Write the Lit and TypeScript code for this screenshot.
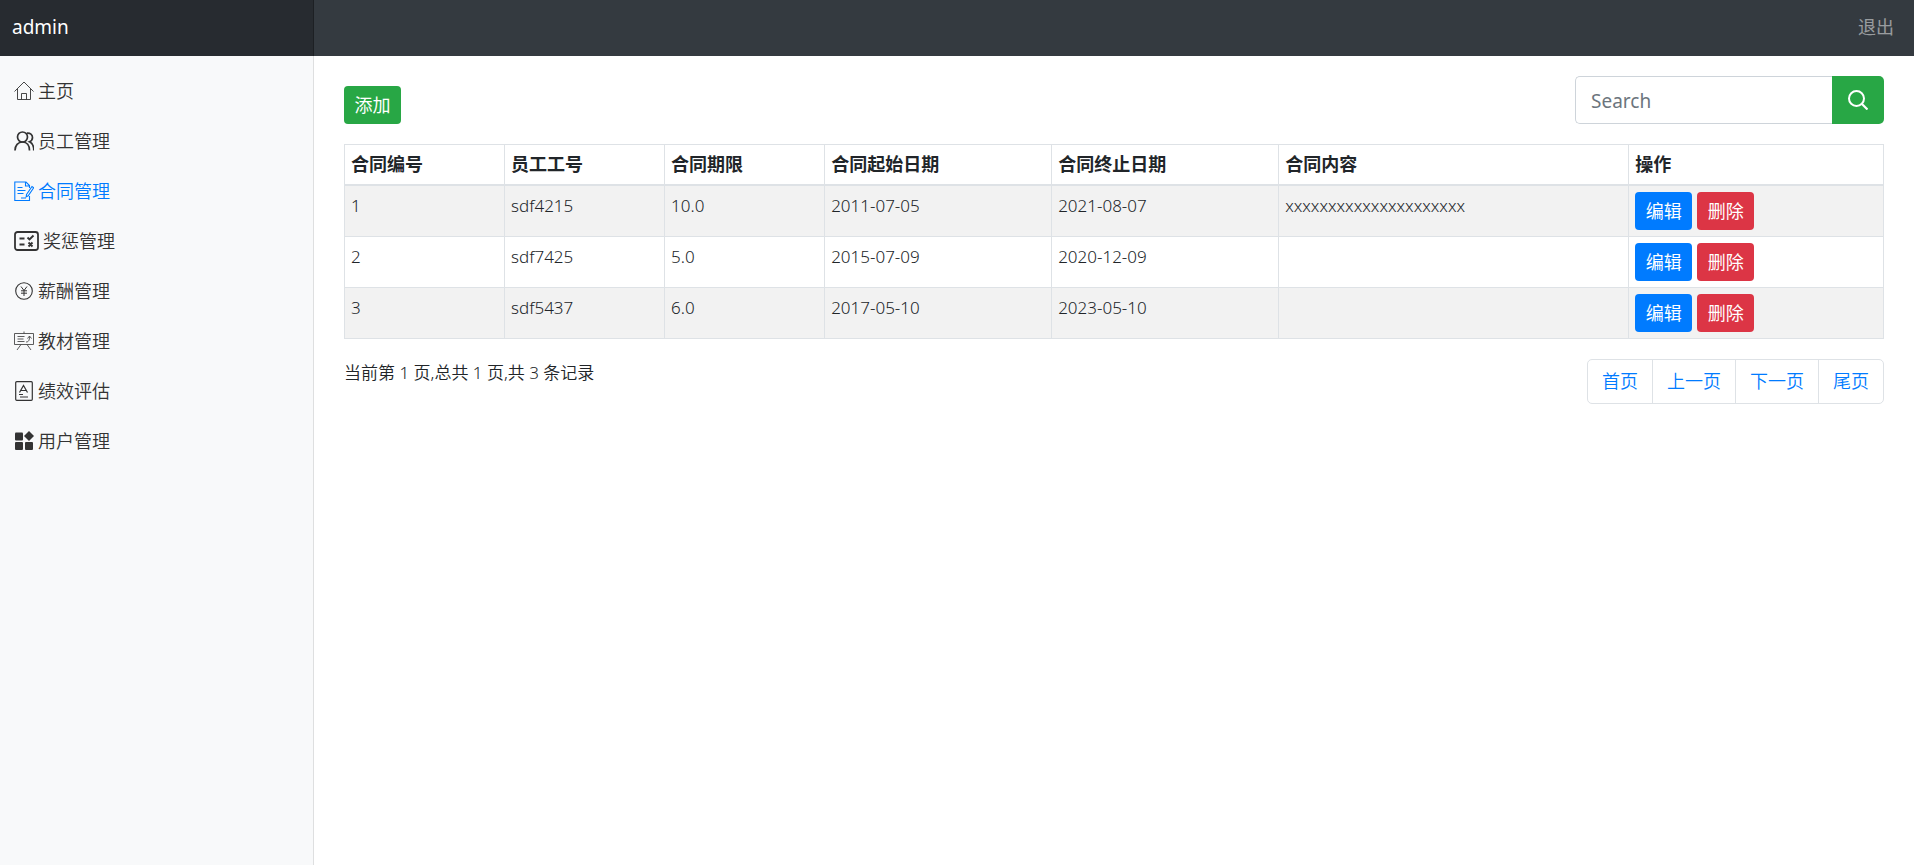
import { LitElement, html, css, svg } from "lit";
import { customElement, state } from "lit/decorators.js";
import { classMap } from "lit/directives/class-map.js";

interface Contract {
  id: number;
  employee: string;
  term: string;
  start: string;
  end: string;
  content: string;
}

const contracts: Contract[] = [
  { id: 1, employee: "sdf4215", term: "10.0", start: "2011-07-05", end: "2021-08-07", content: "xxxxxxxxxxxxxxxxxxxxx" },
  { id: 2, employee: "sdf7425", term: "5.0", start: "2015-07-09", end: "2020-12-09", content: "" },
  { id: 3, employee: "sdf5437", term: "6.0", start: "2017-05-10", end: "2023-05-10", content: "" },
];

const icons = {
  home: svg`<path d="M.5 10.500 10 1l9.500 9.500M3.500 8v10.500h13V8M7.500 18.500v-6h5v6" stroke-width=".9"/>`,
  staff: svg`<circle cx="8.500" cy="6" r="5" stroke-width="1.700"/><path d="M1 19.500c0-5 3-8.500 7.500-8.500s7 3.500 7 8.500M13 2.200c3.200-.4 5.500 1.500 5.500 4.300 0 2-1 3.500-3 4.300 2.700 1.200 4.300 4.500 4.300 8.700" stroke-width="1.700"/>`,
  contract: svg`<path d="M15.500 7V4.500L12 1H.8v18.500h14.700V15M11.500 1v4h4M3.500 6.500h5M3.500 9.500h8M3.500 12.500h6M7 17h5M12.500 13.500l5.500-8 1.700 1.200-5.500 8-2 1z" stroke-width="1.100"/>`,
  reward: svg`<rect x="1" y="1" width="23" height="18" rx="2.500" stroke-width="1.800"/><path d="M5.500 7.500h5M5.500 13.500h5M13.500 6.500l2 2 4-4M14.500 11.500l4 4M18.500 11.500l-4 4" stroke-width="1.900"/>`,
  salary: svg`<circle cx="10" cy="10" r="8.300" stroke-width="1.100"/><path d="M7 5.500l3 4 3-4M10 9.500V15M7 9.800h6M7 12.200h6" stroke-width="1"/>`,
  teaching: svg`<path d="M.5 2.500h19v11H.5zM10 2.500V.5M7 13.500l-4 5.500M13 13.500l4 5.500M3.500 5.500h7M3.500 8h6M3.500 10.500h7M12 11c2.500 0 3.500-1.500 3.500-5.500M13.500 7.500l2-2.500 2 2.500" stroke-width=".8"/>`,
  review: svg`<rect x="1.700" y=".7" width="16.600" height="18.600" rx="1" stroke-width="1.200"/><path d="M5.500 11.500 9.500 4.500l4 7M7 9.500h5M5 13.500h4M6 16h8" stroke-width="1.200"/>`,
  users: svg`<g fill="currentColor" stroke="none"><rect x="1" y="1.500" width="8" height="8" rx="1"/><rect x="1" y="11" width="8" height="8" rx="1"/><rect x="11" y="11" width="8" height="8" rx="1"/><path d="M15 0l5 5-5 5-5-5z"/></g>`,
};

interface NavEntry {
  label: string;
  icon: keyof typeof icons;
  wide?: boolean;
}

const entries: NavEntry[] = [
  { label: "主页", icon: "home" },
  { label: "员工管理", icon: "staff" },
  { label: "合同管理", icon: "contract" },
  { label: "奖惩管理", icon: "reward", wide: true },
  { label: "薪酬管理", icon: "salary" },
  { label: "教材管理", icon: "teaching" },
  { label: "绩效评估", icon: "review" },
  { label: "用户管理", icon: "users" },
];

@customElement("app-root")
export class AppRoot extends LitElement {
  static styles = css`
    :host {
      display: flex;
      flex-direction: column;
      min-height: 100vh;
      background: #fff;
      color: #212529;
      font-family: "Noto Sans", "Noto Sans CJK SC", sans-serif;
      font-size: 17px;
      line-height: 27px;
    }
    * { box-sizing: border-box; }
    a { text-decoration: none; color: #007bff; }
    button { font: inherit; border: 0; cursor: pointer; color: #fff; }
    .cjk { font-size: 18px; font-weight: 350; }
    .topbar {
      display: flex;
      align-items: stretch;
      height: 56px;
      background: #343a40;
    }
    .brand {
      width: 314px;
      padding: 14px 12px;
      font-size: 19px;
      color: #fff;
      background: rgba(0, 0, 0, 0.25);
      box-shadow: inset -1px 0 0 rgba(0, 0, 0, 0.25);
    }
    .logout {
      margin-left: auto;
      padding: 14px 20px;
      font-weight: 400;
      color: rgba(255, 255, 255, 0.5);
    }
    .body { flex: 1; display: flex; }
    .sidebar {
      flex: none;
      width: 314px;
      padding-top: 10px;
      background: #f8f9fa;
      box-shadow: inset -1px 0 0 rgba(0, 0, 0, 0.1);
    }
    .menu { list-style: none; margin: 0; padding: 0; }
    .entry {
      display: flex;
      align-items: center;
      gap: 4px;
      height: 50px;
      padding: 0 14px;
      color: #333;
    }
    .entry.active { color: #007bff; }
    .icon {
      display: block;
      flex: none;
      fill: none;
      stroke: currentColor;
    }
    main { flex: 1; min-width: 0; padding: 20px 30px; }
    .tools {
      display: flex;
      justify-content: space-between;
      align-items: flex-end;
      margin-bottom: 20px;
    }
    .btn {
      min-width: 57px;
      height: 38px;
      padding: 0 10px;
      border-radius: 4px;
      font-weight: 400;
    }
    .add { background: #28a745; }
    .edit { background: #007bff; }
    .delete { background: #dc3545; }
    .search { display: flex; width: 309px; height: 48px; }
    .field {
      flex: 1;
      min-width: 0;
      padding: 2px 15px 0;
      border: 1px solid #ced4da;
      border-right: 0;
      border-radius: 5px 0 0 5px;
      font: inherit;
      font-size: 19px;
    }
    .field::placeholder { color: #6c757d; opacity: 1; }
    .go {
      display: grid;
      place-items: center;
      width: 52px;
      padding: 0;
      background: #28a745;
      border-radius: 0 5px 5px 0;
    }
    table {
      width: 100%;
      table-layout: fixed;
      border-collapse: collapse;
    }
    th, td {
      border: 1px solid #dee2e6;
      padding: 6px;
      text-align: left;
      vertical-align: top;
    }
    th { border-bottom-width: 2px; font-size: 18px; font-weight: 700; }
    td { font-weight: 300; }
    tbody tr:nth-child(odd) { background: #f2f2f2; }
    .short { width: 10.4%; }
    .date { width: 14.75%; }
    .long { width: 22.75%; }
    .actions { display: flex; gap: 5px; }
    .foot {
      display: flex;
      justify-content: space-between;
      align-items: flex-start;
      margin-top: 20px;
    }
    .status { font-weight: 350; }
    .pages { display: flex; list-style: none; margin: 0; padding: 0; }
    .page {
      display: block;
      padding: 8px 14px;
      border: 1px solid #dee2e6;
    }
    .pages li + li { margin-left: -1px; }
    .pages li:first-child .page { border-radius: 5px 0 0 5px; }
    .pages li:last-child .page { border-radius: 0 5px 5px 0; }
  `;

  @state() private current = "合同管理";

  private pick(event: Event, label: string) {
    event.preventDefault();
    this.current = label;
  }

  render() {
    return html`
      <header class="topbar">
        <a class="brand" href="#">admin</a>
        <a class="cjk logout" href="#">退出</a>
      </header>
      <div class="body">
        <nav class="sidebar">
          <ul class="menu">
            ${entries.map(
              (e) => html`<li>
                <a
                  href="#"
                  class=${classMap({ entry: true, cjk: true, active: e.label === this.current })}
                  @click=${(ev: Event) => this.pick(ev, e.label)}
                >
                  <svg class="icon" width=${e.wide ? 25 : 20} height="20" viewBox=${e.wide ? "0 0 25 20" : "0 0 20 20"} aria-hidden="true">${icons[e.icon]}</svg>
                  <span>${e.label}</span>
                </a>
              </li>`
            )}
          </ul>
        </nav>
        <main>
          <div class="tools">
            <button class="btn add cjk">添加</button>
            <form class="search" role="search" @submit=${(ev: Event) => ev.preventDefault()}>
              <input class="field" type="text" placeholder="Search" aria-label="Search" />
              <button class="go" aria-label="Search">
                <svg class="icon" width="20" height="20" viewBox="0 0 20 20" aria-hidden="true">
                  <circle cx="8.500" cy="8.500" r="7.500" stroke-width="2" />
                  <path d="M14 14l5.500 5.500" stroke-width="2.200" />
                </svg>
              </button>
            </form>
          </div>
          <table>
            <thead>
              <tr>
                <th class="short">合同编号</th>
                <th class="short">员工工号</th>
                <th class="short">合同期限</th>
                <th class="date">合同起始日期</th>
                <th class="date">合同终止日期</th>
                <th class="long">合同内容</th>
                <th>操作</th>
              </tr>
            </thead>
            <tbody>
              ${contracts.map(
                (c) => html`<tr>
                  <td>${c.id}</td>
                  <td>${c.employee}</td>
                  <td>${c.term}</td>
                  <td>${c.start}</td>
                  <td>${c.end}</td>
                  <td>${c.content}</td>
                  <td>
                    <div class="actions">
                      <button class="btn edit cjk">编辑</button>
                      <button class="btn delete cjk">删除</button>
                    </div>
                  </td>
                </tr>`
              )}
            </tbody>
          </table>
          <div class="foot">
            <span class="status">当前第 1 页,总共 1 页,共 3 条记录</span>
            <ul class="pages">
              ${["首页", "上一页", "下一页", "尾页"].map(
                (p) => html`<li><a class="page cjk" href="#">${p}</a></li>`
              )}
            </ul>
          </div>
        </main>
      </div>
    `;
  }
}
